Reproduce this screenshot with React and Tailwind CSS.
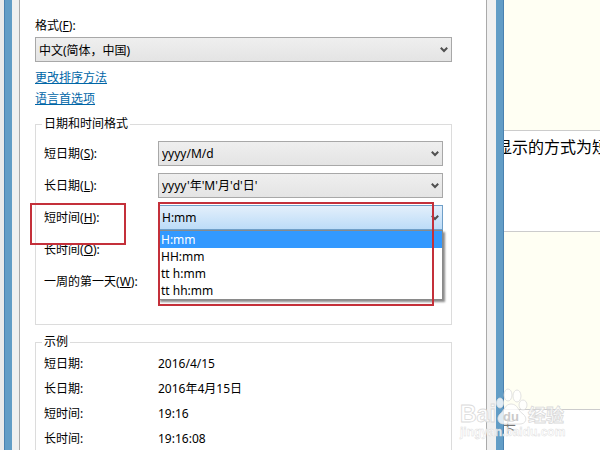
const formatRows = [
  { id: 'short-date', text: '短日期', accel: 'S', value: 'yyyy/M/d' },
  { id: 'long-date', text: '长日期', accel: 'L', value: "yyyy'年'M'月'd'日'" },
  { id: 'short-time', text: '短时间', accel: 'H', value: 'H:mm', open: true },
  { id: 'long-time', text: '长时间', accel: 'O' },
  { id: 'first-day', text: '一周的第一天', accel: 'W' },
]

const timeOptions = ['H:mm', 'HH:mm', 'tt h:mm', 'tt hh:mm']

const examples = [
  ['短日期:', '2016/4/15'],
  ['长日期:', '2016年4月15日'],
  ['短时间:', '19:16'],
  ['长时间:', '19:16:08'],
]

function ComboBox({ id, value, open }) {
  return (
    <div className="relative">
      <select
        id={id}
        className={`block h-[25px] w-full appearance-none border px-[3px] pt-0.5 text-xs text-black outline-none ${
          open
            ? 'border-[#6f9fc8] bg-linear-to-b from-[#e3effb] to-[#bcdcf8]'
            : 'border-[#a8a8a8] bg-linear-to-b from-[#efefef] to-[#e4e4e4]'
        }`}
      >
        {value && <option>{value}</option>}
      </select>
      <svg className="pointer-events-none absolute top-[9px] right-1 h-2 w-2" viewBox="0 0 8 8">
        <path d="M0.8 1.8 L4 5 L7.2 1.8" fill="none" stroke="#505050" strokeWidth="2" />
      </svg>
    </div>
  )
}

function FormatRow({ id, text, accel, value, open }) {
  return (
    <div className="relative flex h-8 items-center">
      <label htmlFor={id} className="w-[114px] shrink-0 pt-0.5">
        {text}(<u>{accel}</u>):
      </label>
      <div className="relative min-w-0 flex-1">
        <ComboBox id={id} value={value} open={open} />
        {open && (
          <>
            <ul
              role="listbox"
              className="absolute inset-x-0 top-full z-10 border border-[#8a8a8a] bg-white shadow-[2px_2px_2px_#8a8a8a]"
            >
              {timeOptions.map((option, i) => (
                <li
                  key={option}
                  role="option"
                  aria-selected={i === 0}
                  className={`h-[17px] px-0.5 leading-[17px] ${i === 0 ? 'bg-[#3399ff] text-white' : ''}`}
                >
                  {option}
                </li>
              ))}
            </ul>
            <div className="pointer-events-none absolute -top-[3px] right-[9px] left-0 z-20 h-[104px] border-2 border-[#c4303a]" />
          </>
        )}
      </div>
      {open && (
        <div className="pointer-events-none absolute -left-3.5 top-0.5 z-20 h-[42px] w-24 border-2 border-[#c4303a]" />
      )}
    </div>
  )
}

function Watermark() {
  return (
    <div className="pointer-events-none absolute right-8 bottom-3 z-30 h-[54px] w-[108px]">
      <svg
        className="h-full w-full overflow-visible"
        viewBox="0 0 108 54"
        fontFamily="Liberation Sans, Noto Sans CJK SC, sans-serif"
        fontWeight="bold"
      >
        <g fill="#ffffff" fillOpacity="0.8" stroke="#dadada" strokeWidth="0.8">
          <ellipse cx="40" cy="19" rx="3.5" ry="5" />
          <ellipse cx="48" cy="11" rx="4" ry="6" />
          <ellipse cx="57" cy="12" rx="4" ry="6" />
          <ellipse cx="63" cy="21" rx="4" ry="5" />
          <path d="M51 20 C45 20 44 27 40 30 C36 34 38 40 44 40 L60 40 C66 40 68 34 63 30 C58 27 58 20 51 20 Z" />
          <text x="0" y="38" fontSize="23">Bai</text>
          <text x="68" y="38" fontSize="18">经验</text>
          <text x="0" y="52" fontSize="12" strokeWidth="0.4">jingyan.baidu.com</text>
        </g>
        <text x="43" y="37" fontSize="13" fill="#cacaca">du</text>
      </svg>
    </div>
  )
}

export default function App() {
  return (
    <div className="relative flex h-screen overflow-hidden bg-[#e9eaea] font-['Noto_Sans','Noto_Sans_CJK_SC',sans-serif] text-xs text-black">
      <div className="ml-1 flex min-w-0 flex-1 border-x border-[#4a82b0] bg-[#629dc6] px-[7px]">
        <div className="min-w-0 flex-1 bg-[#f0f0f0] pr-[9px] pl-[7px]">
          <main className="h-full overflow-hidden border-x border-[#aaaaaa] bg-white pt-[17px] pr-[34px] pl-[15px]">
            <label htmlFor="format" className="block pb-0.5 leading-[18px]">
              格式(<u>F</u>):
            </label>
            <ComboBox id="format" value="中文(简体，中国)" />
            <div className="flex flex-col items-start gap-[3px] pt-[7px] leading-[18px] text-[#0066a7] underline">
              <a href="#sort">更改排序方法</a>
              <a href="#language">语言首选项</a>
            </div>

            <fieldset className="mt-[7px] border border-[#dcdcdc] px-2 pt-1 pb-[27px]">
              <legend className="-ml-0.5 px-0.5 leading-[18px]">日期和时间格式</legend>
              {formatRows.map((row) => (
                <FormatRow key={row.id} {...row} />
              ))}
            </fieldset>

            <fieldset className="mt-2 border border-[#dcdcdc] px-2 pb-4">
              <legend className="-ml-0.5 px-0.5 leading-[18px]">示例</legend>
              <dl>
                {examples.map(([name, value]) => (
                  <div key={name} className="flex h-[25px] items-center">
                    <dt className="w-[114px]">{name}</dt>
                    <dd>{value}</dd>
                  </div>
                ))}
              </dl>
            </fieldset>
          </main>
        </div>
      </div>

      <aside className="flex w-24 shrink-0 flex-col overflow-hidden bg-white text-base">
        <div className="h-[131px] shrink-0 border-b border-[#cccccc] bg-[#fffff3]" />
        <p className="-ml-2 h-[100px] shrink-0 pt-1 leading-6 whitespace-nowrap">显示的方式为短</p>
        <div className="h-[179px] shrink-0 border-y border-[#cccccc] bg-[#fffff3]" />
        <p className="-ml-1 pt-1 leading-6 whitespace-nowrap text-[#777777]">卡</p>
      </aside>

      <Watermark />
    </div>
  )
}
